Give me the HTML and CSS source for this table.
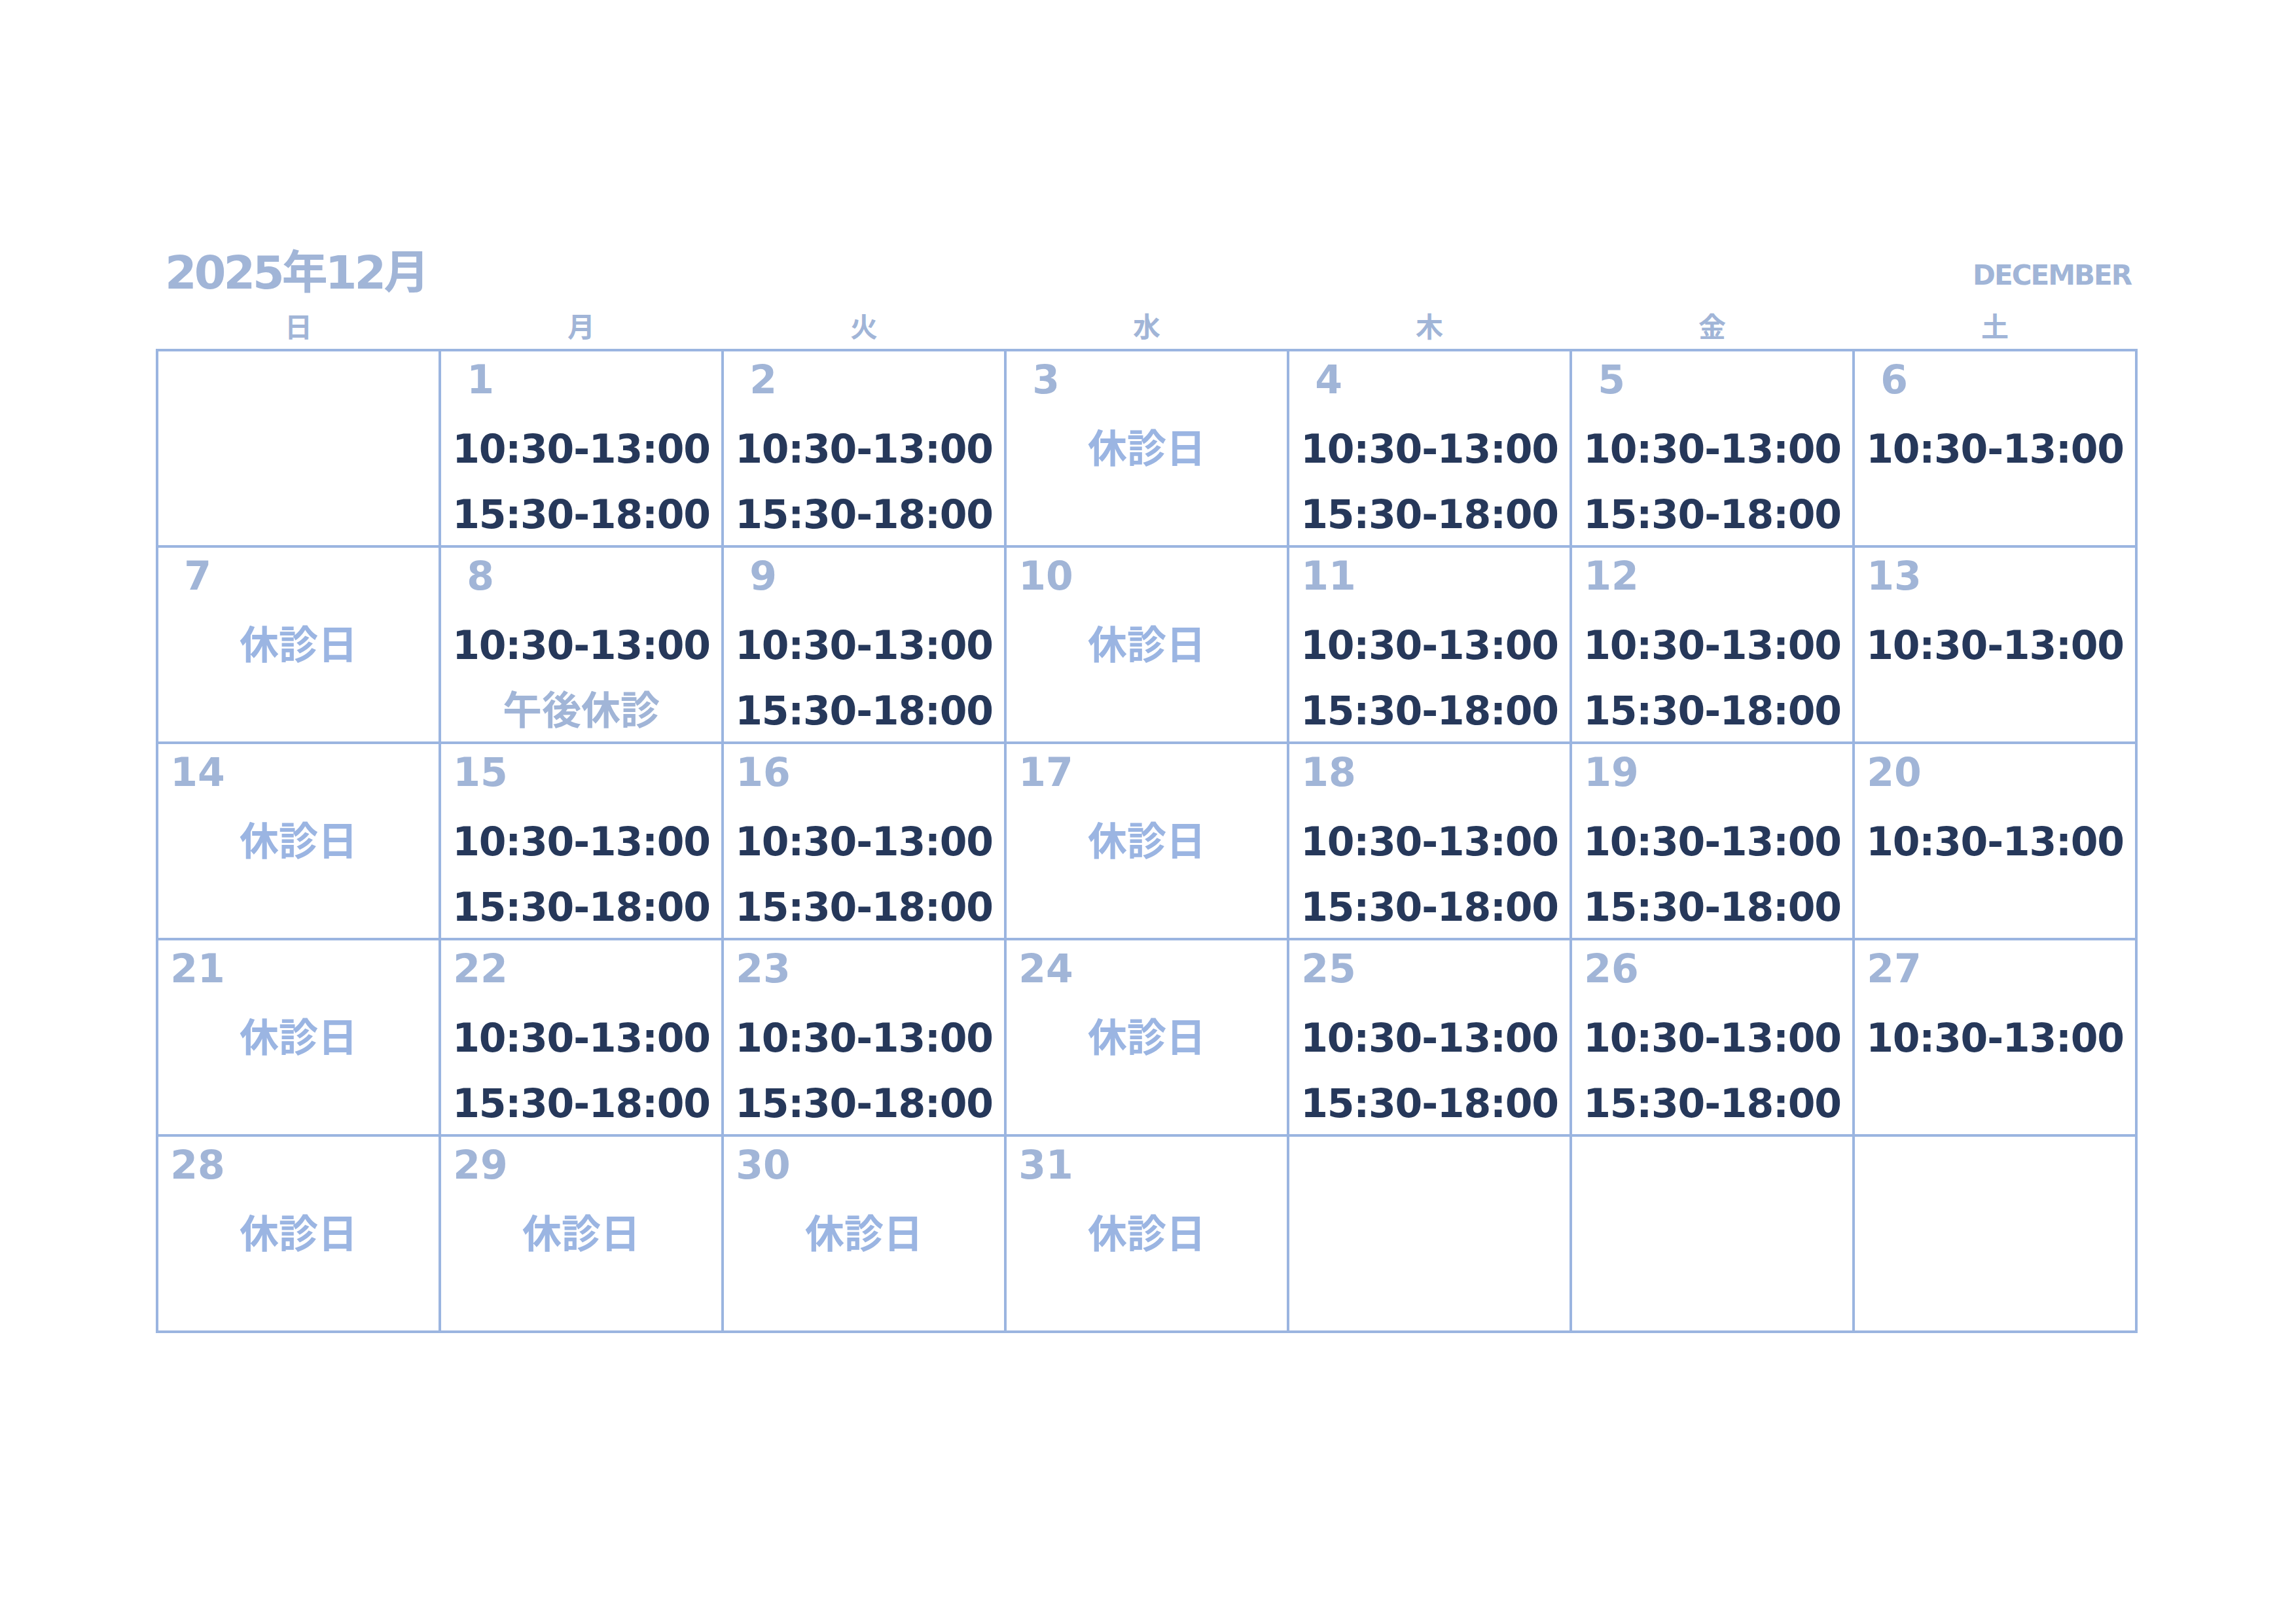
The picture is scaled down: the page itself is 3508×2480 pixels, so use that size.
FILE: index.html
```html
<!DOCTYPE html>
<html lang="ja">
<head>
<meta charset="utf-8">
<title>2025年12月</title>
<link rel="stylesheet" href="styles.css">
</head>
<body>
<div class="page">
  <div class="cal">
    <div class="head">
      <div class="title">2025年12月</div>
      <div class="eng">DECEMBER</div>
    </div>
    <div class="weekdays">
      <div>日</div><div>月</div><div>火</div><div>水</div><div>木</div><div>金</div><div>土</div>
    </div>
    <div class="grid">
      <div class="cell"></div>
      <div class="cell"><div class="date">1</div><div class="t">10:30-13:00</div><div class="t">15:30-18:00</div></div>
      <div class="cell"><div class="date">2</div><div class="t">10:30-13:00</div><div class="t">15:30-18:00</div></div>
      <div class="cell"><div class="date">3</div><div class="off">休診日</div></div>
      <div class="cell"><div class="date">4</div><div class="t">10:30-13:00</div><div class="t">15:30-18:00</div></div>
      <div class="cell"><div class="date">5</div><div class="t">10:30-13:00</div><div class="t">15:30-18:00</div></div>
      <div class="cell"><div class="date">6</div><div class="t">10:30-13:00</div></div>

      <div class="cell"><div class="date">7</div><div class="off">休診日</div></div>
      <div class="cell"><div class="date">8</div><div class="t">10:30-13:00</div><div class="off pm">午後休診</div></div>
      <div class="cell"><div class="date">9</div><div class="t">10:30-13:00</div><div class="t">15:30-18:00</div></div>
      <div class="cell"><div class="date">10</div><div class="off">休診日</div></div>
      <div class="cell"><div class="date">11</div><div class="t">10:30-13:00</div><div class="t">15:30-18:00</div></div>
      <div class="cell"><div class="date">12</div><div class="t">10:30-13:00</div><div class="t">15:30-18:00</div></div>
      <div class="cell"><div class="date">13</div><div class="t">10:30-13:00</div></div>

      <div class="cell"><div class="date">14</div><div class="off">休診日</div></div>
      <div class="cell"><div class="date">15</div><div class="t">10:30-13:00</div><div class="t">15:30-18:00</div></div>
      <div class="cell"><div class="date">16</div><div class="t">10:30-13:00</div><div class="t">15:30-18:00</div></div>
      <div class="cell"><div class="date">17</div><div class="off">休診日</div></div>
      <div class="cell"><div class="date">18</div><div class="t">10:30-13:00</div><div class="t">15:30-18:00</div></div>
      <div class="cell"><div class="date">19</div><div class="t">10:30-13:00</div><div class="t">15:30-18:00</div></div>
      <div class="cell"><div class="date">20</div><div class="t">10:30-13:00</div></div>

      <div class="cell"><div class="date">21</div><div class="off">休診日</div></div>
      <div class="cell"><div class="date">22</div><div class="t">10:30-13:00</div><div class="t">15:30-18:00</div></div>
      <div class="cell"><div class="date">23</div><div class="t">10:30-13:00</div><div class="t">15:30-18:00</div></div>
      <div class="cell"><div class="date">24</div><div class="off">休診日</div></div>
      <div class="cell"><div class="date">25</div><div class="t">10:30-13:00</div><div class="t">15:30-18:00</div></div>
      <div class="cell"><div class="date">26</div><div class="t">10:30-13:00</div><div class="t">15:30-18:00</div></div>
      <div class="cell"><div class="date">27</div><div class="t">10:30-13:00</div></div>

      <div class="cell"><div class="date">28</div><div class="off">休診日</div></div>
      <div class="cell"><div class="date">29</div><div class="off">休診日</div></div>
      <div class="cell"><div class="date">30</div><div class="off">休診日</div></div>
      <div class="cell"><div class="date">31</div><div class="off">休診日</div></div>
      <div class="cell"></div>
      <div class="cell"></div>
      <div class="cell"></div>
    </div>
  </div>
</div>
</body>
</html>
```
FILE: styles.css
```css
html, body {
  margin: 0;
  padding: 0;
  background: #ffffff;
}
.page {
  width: 3508px;
  height: 2480px;
  padding: 382px 0 0 238px;
  box-sizing: border-box;
  font-family: "DejaVu Sans", "Noto Sans CJK JP", sans-serif;
  font-weight: bold;
}
.cal {
  width: 3028px;
}
.head {
  display: flex;
  justify-content: space-between;
  align-items: flex-start;
  height: 70px;
}
.title {
  font-size: 70px;
  line-height: 70px;
  letter-spacing: -4px;
  color: #a1b5d7;
  padding-left: 14px;
  white-space: nowrap;
}
.eng {
  font-size: 42px;
  line-height: 42px;
  letter-spacing: -2px;
  color: #a1b5d7;
  margin-top: 18px;
  padding-right: 10px;
}
.weekdays {
  display: grid;
  grid-template-columns: repeat(7, 1fr);
  column-gap: 4px;
  padding: 0 4px;
  margin: 24px 0 15px;
  font-family: "Noto Sans CJK JP", sans-serif;
  font-size: 42px;
  line-height: 42px;
  color: #a1b5d7;
  text-align: center;
}
.grid {
  display: grid;
  grid-template-columns: repeat(7, 1fr);
  grid-template-rows: repeat(5, 296px);
  gap: 4px;
  padding: 4px;
  background: #9bb5e0;
}
.cell {
  background: #ffffff;
  min-width: 0;
}
.date {
  width: 84px;
  margin: 0 0 13px 18px;
  text-align: center;
  font-size: 60px;
  line-height: 86px;
  color: #a1b5d7;
}
.t {
  font-size: 60px;
  line-height: 100px;
  letter-spacing: -1.2px;
  text-align: center;
  color: #26385a;
  white-space: nowrap;
}
.off {
  font-size: 60px;
  line-height: 100px;
  text-align: center;
  color: #9bb5e2;
  white-space: nowrap;
}
.off.pm {
  color: #a1b5d7;
}
```
